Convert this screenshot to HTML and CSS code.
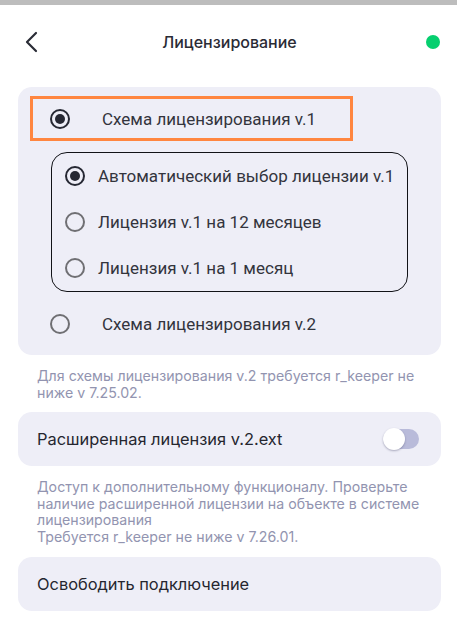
FILE: index.html
```html
<!DOCTYPE html>
<html lang="ru">
<head>
<meta charset="utf-8">
<link rel="stylesheet" href="styles.css">
</head>
<body>
<div class="statusbar"></div>
<header class="header">
  <svg class="back" width="14" height="22" viewBox="0 0 14 22"><polyline points="11,2 2,11 11,20" fill="none" stroke="#2a2c36" stroke-width="2.2" stroke-linecap="round" stroke-linejoin="round"/></svg>
  <div class="title">Лицензирование</div>
  <span class="dot"></span>
</header>

<section class="card card-scheme">
  <div class="row row-main selected-frame">
    <span class="radio checked"></span>
    <span class="label">Схема лицензирования v.1</span>
  </div>
  <div class="subgroup">
    <div class="row row-sub">
      <span class="radio checked"></span>
      <span class="label">Автоматический выбор лицензии v.1</span>
    </div>
    <div class="row row-sub">
      <span class="radio"></span>
      <span class="label">Лицензия v.1 на 12 месяцев</span>
    </div>
    <div class="row row-sub">
      <span class="radio"></span>
      <span class="label">Лицензия v.1 на 1 месяц</span>
    </div>
  </div>
  <div class="row row-main row-v2">
    <span class="radio"></span>
    <span class="label">Схема лицензирования v.2</span>
  </div>
</section>
<p class="hint hint-1">Для схемы лицензирования v.2 требуется r_keeper не ниже v 7.25.02.</p>

<section class="card card-line">
  <span class="card-text">Расширенная лицензия v.2.ext</span>
  <span class="toggle"><span class="thumb"></span></span>
</section>
<p class="hint hint-2">Доступ к дополнительному функционалу. Проверьте наличие расширенной лицензии на объекте в системе лицензирования<br>Требуется r_keeper не ниже v 7.26.01.</p>

<section class="card card-line card-release">
  <span class="card-text">Освободить подключение</span>
</section>
</body>
</html>
```

FILE: styles.css
```css
* { box-sizing: border-box; }
html, body { margin: 0; padding: 0; background: #ffffff; }
body {
  width: 457px;
  font-family: Inter, "Noto Sans", sans-serif;
  color: #25262f;
}
.statusbar { height: 5px; background: #bdbdbd; }

.header {
  height: 73px;
  display: flex;
  align-items: center;
  justify-content: space-between;
  padding: 0 17px 0 25px;
  position: relative;
}
.back { display: block; }
.title {
  position: absolute;
  left: 0; right: 0;
  text-align: center;
  font-size: 16px;
  font-weight: 500;
  color: #2a2b35;
  top: 27px;
  padding-left: 2px;
}
.dot {
  width: 14px; height: 14px;
  border-radius: 50%;
  background: #06cf6f;
}

.card {
  margin: 0 16px 0 18px;
  background: #eeeef7;
  border-radius: 14px;
}
.card-scheme {
  margin-top: 9px;
  padding: 9px 12px 8px 12px;
  display: flex;
  flex-direction: column;
}
.row { display: flex; align-items: center; }
.label {
  font-family: Roboto, "Noto Sans", sans-serif;
  font-size: 17px;
  color: #33343d;
}
.row-main { height: 46px; padding-left: 20px; }
.row-main .label { margin-left: 32px; }
.selected-frame {
  height: 45px;
  width: 323px;
  border: 3px solid #ff8640;
  padding-left: 17px;
}
.subgroup {
  margin: 11px 21px 0 21px;
  border: 1.2px solid #111217;
  border-radius: 16px;
  width: 357px;
}
.row-sub { height: 46px; padding-left: 13px; }
.row-sub .label { margin-left: 13px; }
.row-v2 { margin-top: 9px; }

.radio {
  flex: none;
  width: 20px; height: 20px;
  border-radius: 50%;
  border: 2px solid #6f6f73;
  position: relative;
}
.radio.checked { border-color: #262833; border-width: 2.5px; }
.radio.checked::after {
  content: "";
  position: absolute;
  left: 50%; top: 50%;
  width: 10px; height: 10px;
  margin: -5px 0 0 -5px;
  border-radius: 50%;
  background: #262833;
}

.hint {
  margin: 0;
  padding: 0 35px 0 37px;
  font-size: 14.2px;
  line-height: 16.6px;
  color: #9294b0;
}
.hint-1 { margin-top: 13px; }
.hint-2 { margin-top: 13px; }

.card-line {
  height: 54px;
  display: flex;
  align-items: center;
  justify-content: space-between;
  padding: 0 22px 0 19px;
  margin-top: 11px;
}
.card-text { font-size: 16.4px; color: #25262f; }
.card-release { margin-top: 11px; }

.toggle {
  width: 36px; height: 20px;
  border-radius: 10px;
  background: #b9bbda;
  position: relative;
}
.thumb {
  position: absolute;
  left: 0; top: -1px;
  width: 22px; height: 22px;
  border-radius: 50%;
  background: #ffffff;
  box-shadow: 0 1px 2px rgba(40, 40, 80, 0.35);
}
```
